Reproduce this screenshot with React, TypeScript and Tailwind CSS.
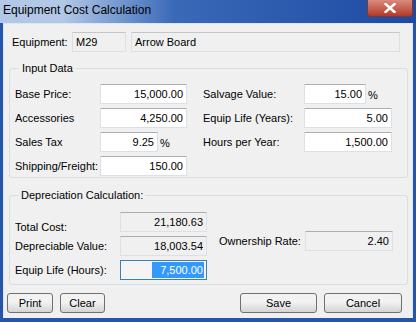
import React from "react";

const font = "font-['Liberation_Sans',Arial,sans-serif]";

type BoxProps = {
  value: string;
  w: string;
  readOnly?: boolean;
  focused?: boolean;
};

const Box: React.FC<BoxProps> = ({ value, w, readOnly, focused }) => {
  if (focused) {
    return (
      <div className={`${w} h-[20px] flex items-center justify-end border border-[#3c7fb1] bg-[#f4f4f4] pr-[2px]`}>
        <span className="bg-[#3399ff] text-white leading-[16px] pl-[8px] pr-[1px]">{value}</span>
      </div>
    );
  }
  return (
    <div
      className={`${w} h-[20px] flex items-center justify-end border border-[#dcdfe4] border-t-[#abadb3] pr-[3px] ${
        readOnly ? "bg-[#f0f0f0]" : "bg-white"
      }`}
    >
      {value}
    </div>
  );
};

const Row: React.FC<{ label: string; labelW: string; children: React.ReactNode }> = ({
  label,
  labelW,
  children,
}) => (
  <div className="flex items-center h-[20px]">
    <span className={`${labelW} shrink-0`}>{label}</span>
    {children}
  </div>
);

const Button: React.FC<{ label: string; w: string }> = ({ label, w }) => (
  <button
    className={`${w} h-[20px] rounded-[3px] border border-[#707070] bg-linear-to-b from-[#f2f2f2] from-45% to-[#d4d4d4] text-black leading-none`}
  >
    {label}
  </button>
);

export default function App() {
  return (
    <div className={`w-[416px] h-[322px] bg-[#2456ab] flex flex-col text-[11px] text-black ${font}`}>
      {/* Title bar */}
      <div className="h-[23px] flex justify-between bg-linear-to-r from-[#b3c8e6] from-[15%] via-[#3a69b8] via-[42%] to-[#1c4aa3]">
        <span className="pl-[3px] pt-[3px] text-[12px] leading-[15px] text-black">Equipment Cost Calculation</span>
        <div className="w-[46px] h-[17px] mr-[3px] rounded-b-[4px] border border-t-0 border-[#7a3a36] bg-linear-to-b from-[#d98a7e] to-[#b2382a] flex items-center justify-center">
          <svg width="12" height="10" viewBox="0 0 12 10">
            <path d="M1.5 1 L10.5 9 M10.5 1 L1.5 9" stroke="#fff" strokeWidth="2.4" strokeLinecap="square" />
          </svg>
        </div>
      </div>

      {/* Client area */}
      <div className="mx-[3px] h-[295px] border border-b-0 border-[#dde6f2] bg-[#f0f0f0] flex flex-col">
        {/* Equipment */}
        <div className="flex items-center h-[20px] mt-[8px] pl-[8px]">
          <span className="w-[60px] shrink-0">Equipment:</span>
          <div className="w-[54px] h-[20px] flex items-center pl-[3px] border border-[#dcdfe4] border-t-[#c3c6cc] bg-[#f0f0f0]">M29</div>
          <div className="w-[269px] h-[20px] ml-[5px] flex items-center pl-[3px] border border-[#dcdfe4] border-t-[#c3c6cc] bg-[#f0f0f0]">Arrow Board</div>
        </div>

        {/* Input Data */}
        <fieldset className="ml-[5px] w-[399px] mt-[10px] border border-[#d5dfe5] rounded-[3px] px-[5px] pt-[9px] pb-[1px]">
          <legend className="ml-[4px] px-[3px] leading-[13px]">Input Data</legend>
          <div className="flex">
            <div className="w-[188px] flex flex-col gap-[4px]">
              <Row label="Base Price:" labelW="w-[85px]">
                <Box value="15,000.00" w="w-[87px]" />
              </Row>
              <Row label="Accessories" labelW="w-[85px]">
                <Box value="4,250.00" w="w-[87px]" />
              </Row>
              <Row label="Sales Tax" labelW="w-[85px]">
                <Box value="9.25" w="w-[58px]" />
                <span className="ml-[2px] mt-[3px]">%</span>
              </Row>
              <Row label="Shipping/Freight:" labelW="w-[85px]">
                <Box value="150.00" w="w-[87px]" />
              </Row>
            </div>
            <div className="flex flex-col gap-[4px]">
              <Row label="Salvage Value:" labelW="w-[101px]">
                <Box value="15.00" w="w-[62px]" />
                <span className="ml-[2px] mt-[3px]">%</span>
              </Row>
              <Row label="Equip Life (Years):" labelW="w-[101px]">
                <Box value="5.00" w="w-[88px]" />
              </Row>
              <Row label="Hours per Year:" labelW="w-[101px]">
                <Box value="1,500.00" w="w-[88px]" />
              </Row>
            </div>
          </div>
        </fieldset>

        {/* Depreciation Calculation */}
        <fieldset className="ml-[5px] w-[399px] mt-[11px] border border-[#d5dfe5] rounded-[3px] px-[5px] pt-[10px] pb-[4px]">
          <legend className="ml-[4px] px-[2px] leading-[13px]">Depreciation Calculation:</legend>
          <div className="flex">
            <div className="w-[193px] flex flex-col gap-[4px]">
              <div className="flex items-start h-[20px]">
                <span className="w-[105px] shrink-0 mt-[9px] leading-[13px]">Total Cost:</span>
                <Box value="21,180.63" w="w-[87px]" readOnly />
              </div>
              <Row label="Depreciable Value:" labelW="w-[105px]">
                <Box value="18,003.54" w="w-[87px]" readOnly />
              </Row>
              <Row label="Equip Life (Hours):" labelW="w-[105px]">
                <Box value="7,500.00" w="w-[87px]" focused />
              </Row>
            </div>
            <div className="mt-[19px] ml-[11px]">
              <Row label="Ownership Rate:" labelW="w-[86px]">
                <Box value="2.40" w="w-[88px]" readOnly />
              </Row>
            </div>
          </div>
        </fieldset>

        {/* Buttons */}
        <div className="flex mt-[8px] pl-[3px] pr-[10px]">
          <Button label="Print" w="w-[46px]" />
          <div className="ml-[7px]">
            <Button label="Clear" w="w-[45px]" />
          </div>
          <div className="ml-auto flex gap-[7px]">
            <Button label="Save" w="w-[77px]" />
            <Button label="Cancel" w="w-[78px]" />
          </div>
        </div>
      </div>
    </div>
  );
}
